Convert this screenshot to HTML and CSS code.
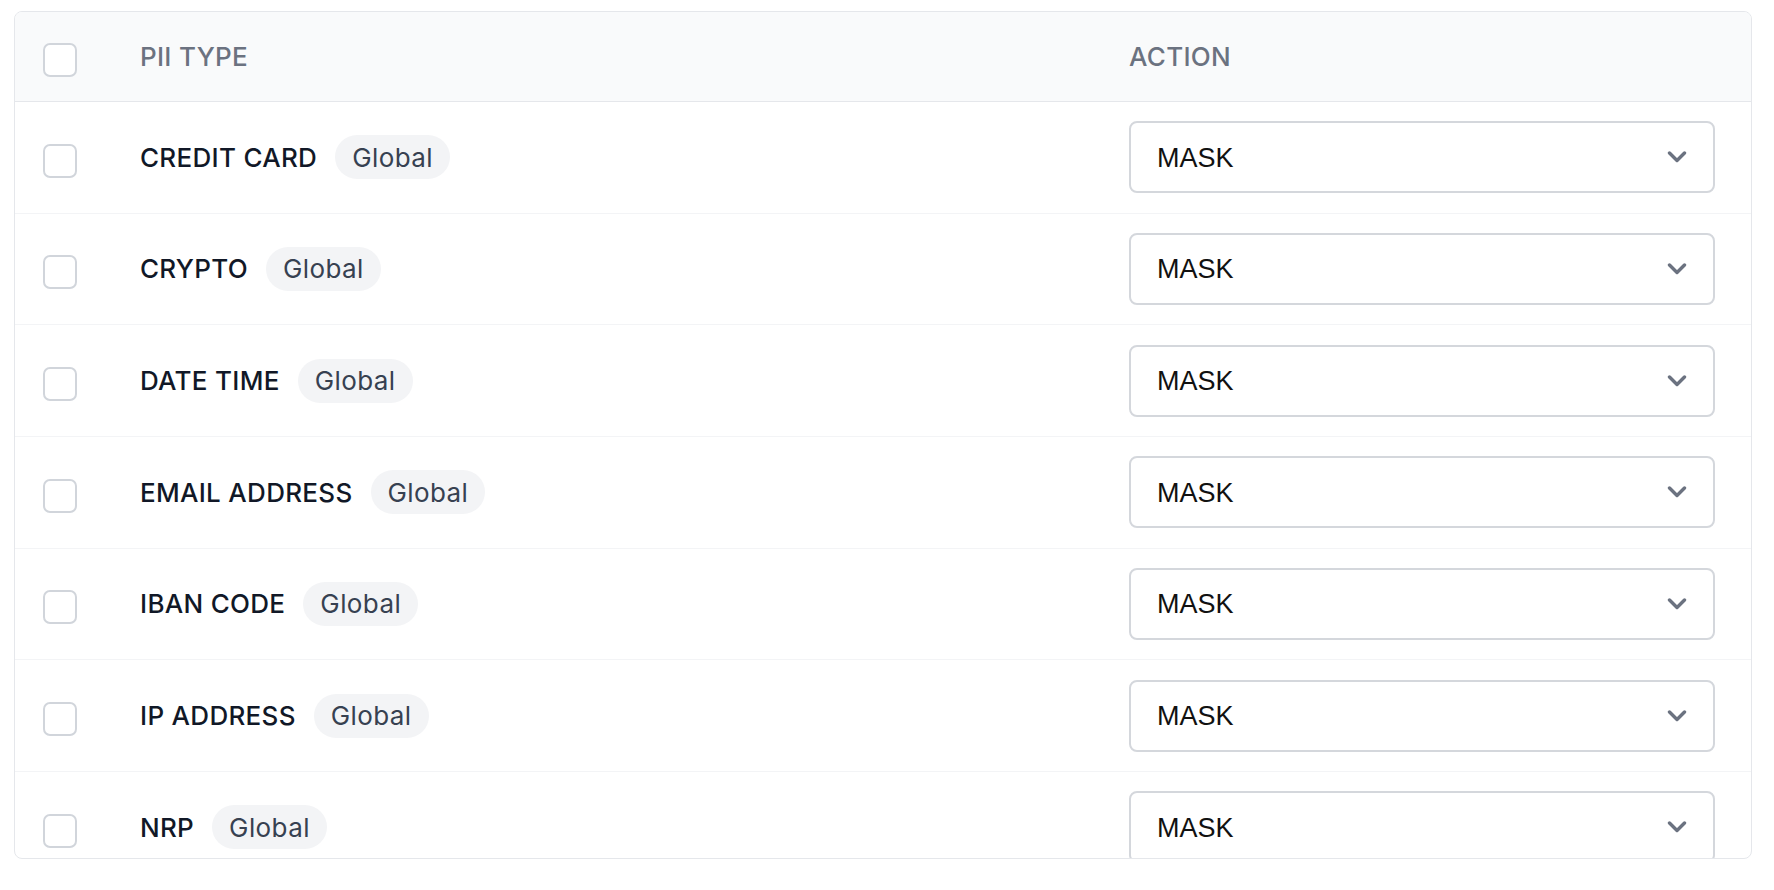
FILE: index.html
```html
<!DOCTYPE html>
<html lang="en">
<head>
<meta charset="utf-8">
<title>PII Types</title>
<link rel="stylesheet" href="styles.css">
</head>
<body>
<div class="page">
  <div class="card">
    <div class="row head">
      <div class="cell-check"><span class="checkbox"></span></div>
      <div class="th">PII TYPE</div>
      <div class="th">ACTION</div>
    </div>
    <div class="row">
      <div class="cell-check"><span class="checkbox"></span></div>
      <div class="name"><span class="label">CREDIT CARD</span><span class="badge">Global</span></div>
      <div class="action"><div class="select"><span>MASK</span><svg class="chev" width="20" height="12" viewBox="0 0 20 12"><polyline points="2.5,2 10,9.5 17.5,2" fill="none" stroke="#6b7280" stroke-width="3.4" stroke-linecap="round" stroke-linejoin="round"/></svg></div></div>
    </div>
    <div class="row">
      <div class="cell-check"><span class="checkbox"></span></div>
      <div class="name"><span class="label">CRYPTO</span><span class="badge">Global</span></div>
      <div class="action"><div class="select"><span>MASK</span><svg class="chev" width="20" height="12" viewBox="0 0 20 12"><polyline points="2.5,2 10,9.5 17.5,2" fill="none" stroke="#6b7280" stroke-width="3.4" stroke-linecap="round" stroke-linejoin="round"/></svg></div></div>
    </div>
    <div class="row">
      <div class="cell-check"><span class="checkbox"></span></div>
      <div class="name"><span class="label">DATE TIME</span><span class="badge">Global</span></div>
      <div class="action"><div class="select"><span>MASK</span><svg class="chev" width="20" height="12" viewBox="0 0 20 12"><polyline points="2.5,2 10,9.5 17.5,2" fill="none" stroke="#6b7280" stroke-width="3.4" stroke-linecap="round" stroke-linejoin="round"/></svg></div></div>
    </div>
    <div class="row">
      <div class="cell-check"><span class="checkbox"></span></div>
      <div class="name"><span class="label">EMAIL ADDRESS</span><span class="badge">Global</span></div>
      <div class="action"><div class="select"><span>MASK</span><svg class="chev" width="20" height="12" viewBox="0 0 20 12"><polyline points="2.5,2 10,9.5 17.5,2" fill="none" stroke="#6b7280" stroke-width="3.4" stroke-linecap="round" stroke-linejoin="round"/></svg></div></div>
    </div>
    <div class="row">
      <div class="cell-check"><span class="checkbox"></span></div>
      <div class="name"><span class="label">IBAN CODE</span><span class="badge">Global</span></div>
      <div class="action"><div class="select"><span>MASK</span><svg class="chev" width="20" height="12" viewBox="0 0 20 12"><polyline points="2.5,2 10,9.5 17.5,2" fill="none" stroke="#6b7280" stroke-width="3.4" stroke-linecap="round" stroke-linejoin="round"/></svg></div></div>
    </div>
    <div class="row">
      <div class="cell-check"><span class="checkbox"></span></div>
      <div class="name"><span class="label">IP ADDRESS</span><span class="badge">Global</span></div>
      <div class="action"><div class="select"><span>MASK</span><svg class="chev" width="20" height="12" viewBox="0 0 20 12"><polyline points="2.5,2 10,9.5 17.5,2" fill="none" stroke="#6b7280" stroke-width="3.4" stroke-linecap="round" stroke-linejoin="round"/></svg></div></div>
    </div>
    <div class="row">
      <div class="cell-check"><span class="checkbox"></span></div>
      <div class="name"><span class="label">NRP</span><span class="badge">Global</span></div>
      <div class="action"><div class="select"><span>MASK</span><svg class="chev" width="20" height="12" viewBox="0 0 20 12"><polyline points="2.5,2 10,9.5 17.5,2" fill="none" stroke="#6b7280" stroke-width="3.4" stroke-linecap="round" stroke-linejoin="round"/></svg></div></div>
    </div>
  </div>
</div>
</body>
</html>
```

FILE: styles.css
```css
* { box-sizing: border-box; }
html, body { margin: 0; padding: 0; background: #ffffff; }
body { font-family: Inter, "Noto Sans", sans-serif; }

.page {
  padding: 11px 0 0 14px;
}

.card {
  width: 1738px;
  height: 848px;
  border: 1px solid #e5e7eb;
  border-radius: 8px;
  overflow: hidden;
  background: #ffffff;
}

.row {
  display: grid;
  grid-template-columns: 125px 1fr 622px;
  align-items: center;
  height: 111.65px;
  border-bottom: 1px solid #f3f4f6;
}

.row.head {
  height: 90px;
  background: #f9fafb;
  border-bottom: 1px solid #e5e7eb;
}

.cell-check {
  padding-left: 28px;
  display: flex;
  align-items: center;
}

.checkbox {
  display: block;
  width: 34px;
  height: 34px;
  margin-top: 7px;
  border: 2px solid #d1d5db;
  border-radius: 7px;
  background: #ffffff;
}

.head .checkbox { margin-top: 6px; }

.th {
  font-size: 26px;
  font-weight: 500;
  color: #6b7280;
  letter-spacing: 0.3px;
}

.name {
  display: flex;
  align-items: center;
  gap: 18px;
}

.label {
  font-size: 26px;
  font-weight: 500;
  color: #111827;
  letter-spacing: 0.3px;
}

.badge {
  display: inline-flex;
  align-items: center;
  height: 44px;
  padding: 0 17px;
  border-radius: 22px;
  background: #f3f4f6;
  color: #374151;
  font-size: 26px;
  font-weight: 400;
  letter-spacing: 0.4px;
}

.action {
  padding-right: 36px;
}

.select {
  display: flex;
  align-items: center;
  justify-content: space-between;
  height: 72px;
  padding: 2px 26px 0 26px;
  border: 2px solid #d4d7dc;
  border-radius: 8px;
  background: #ffffff;
  font-family: "Liberation Sans", Arial, sans-serif;
  font-size: 27px;
  color: #111111;
}

.chev { display: block; margin-top: -2px; }
```
